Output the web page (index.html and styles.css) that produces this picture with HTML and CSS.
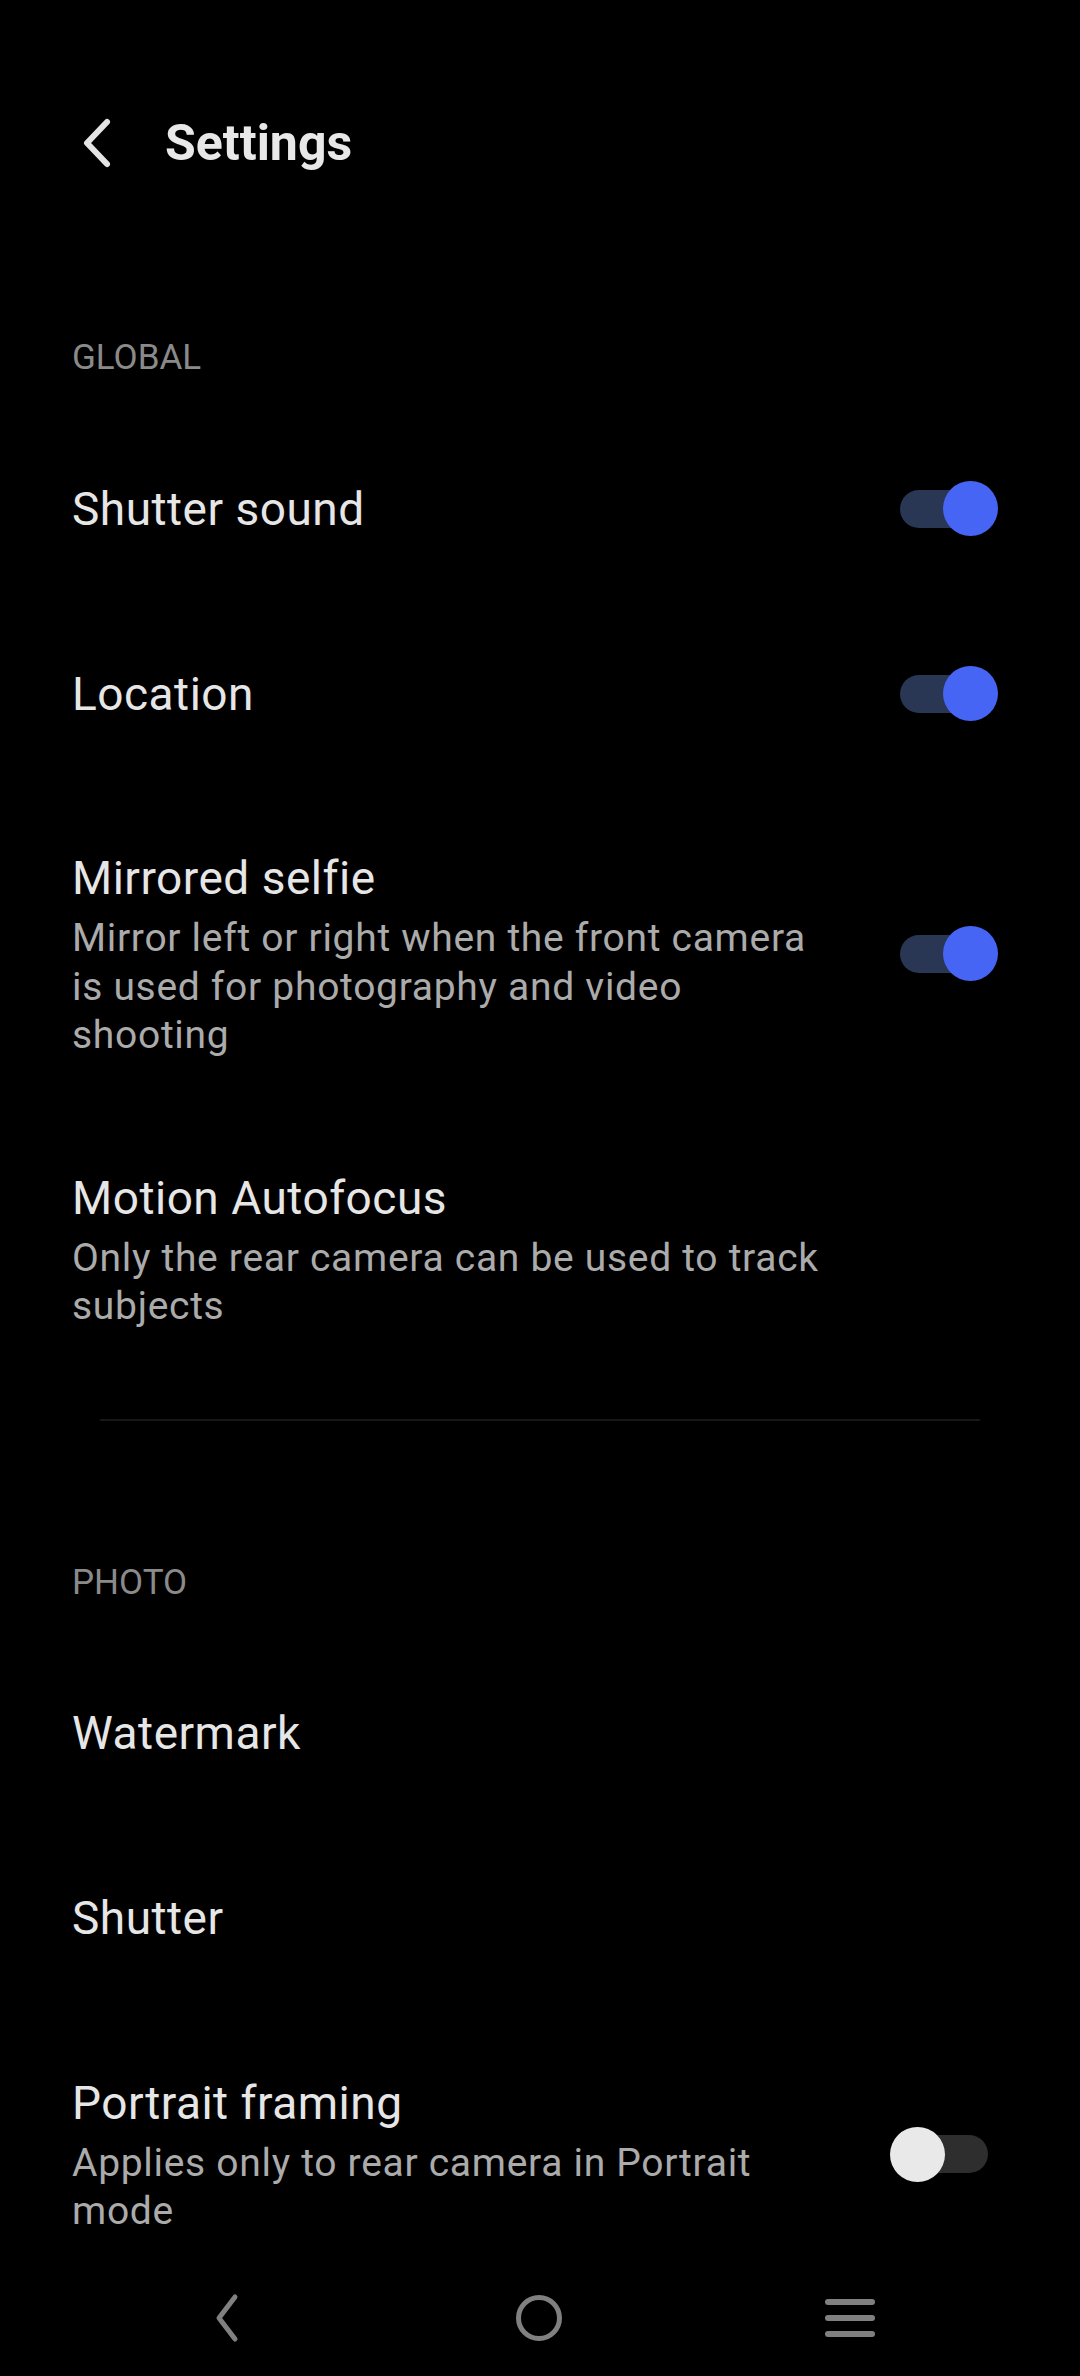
FILE: index.html
```html
<!DOCTYPE html>
<html lang="en">
<head>
<meta charset="utf-8">
<title>Settings</title>
<link rel="stylesheet" href="styles.css">
</head>
<body>
<div class="screen">
  <header class="appbar">
    <svg class="back" width="40" height="56" viewBox="0 0 40 56"><path d="M31 7 L11 28 L31 49" fill="none" stroke="#e4e4e4" stroke-width="6" stroke-linecap="round" stroke-linejoin="round"/></svg>
    <h1 class="appbar-title">Settings</h1>
  </header>

  <section class="group">
    <div class="group-label">GLOBAL</div>
    <div class="row single">
      <div class="text"><div class="title">Shutter sound</div></div>
      <div class="toggle on"><span class="track"></span><span class="thumb"></span></div>
    </div>
    <div class="row single">
      <div class="text"><div class="title">Location</div></div>
      <div class="toggle on"><span class="track"></span><span class="thumb"></span></div>
    </div>
    <div class="row multi after-single">
      <div class="text">
        <div class="title">Mirrored selfie</div>
        <div class="sub">Mirror left or right when the front camera is used for photography and video shooting</div>
      </div>
      <div class="toggle on"><span class="track"></span><span class="thumb"></span></div>
    </div>
    <div class="row multi">
      <div class="text">
        <div class="title">Motion Autofocus</div>
        <div class="sub">Only the rear camera can be used to track subjects</div>
      </div>
    </div>
  </section>

  <div class="divider"></div>

  <section class="group">
    <div class="group-label">PHOTO</div>
    <div class="row single">
      <div class="text"><div class="title">Watermark</div></div>
    </div>
    <div class="row single">
      <div class="text"><div class="title">Shutter</div></div>
    </div>
    <div class="row multi after-single">
      <div class="text">
        <div class="title">Portrait framing</div>
        <div class="sub">Applies only to rear camera in Portrait mode</div>
      </div>
      <div class="toggle off"><span class="track"></span><span class="thumb"></span></div>
    </div>
  </section>
</div>

<nav class="navbar">
  <svg class="nav-icon" width="60" height="60" viewBox="0 0 60 60"><path d="M38 9 L22 30 L38 51" fill="none" stroke="#808080" stroke-width="5" stroke-linecap="round" stroke-linejoin="round"/></svg>
  <svg class="nav-icon" width="60" height="60" viewBox="0 0 60 60"><circle cx="30" cy="30" r="20.5" fill="none" stroke="#808080" stroke-width="5"/></svg>
  <svg class="nav-icon" width="60" height="60" viewBox="0 0 60 60"><path d="M8 14 H52 M8 30 H52 M8 46 H52" fill="none" stroke="#808080" stroke-width="6" stroke-linecap="round"/></svg>
</nav>
</body>
</html>
```

FILE: styles.css
```css
* { box-sizing: border-box; }
html, body {
  margin: 0;
  padding: 0;
  background: #000;
}
body {
  width: 1080px;
  height: 2376px;
  overflow: hidden;
  font-family: Roboto, "Noto Sans", "Liberation Sans", sans-serif;
  color: #e6e6e6;
}
.screen {
  display: flex;
  flex-direction: column;
}
.appbar {
  display: flex;
  align-items: center;
  height: 60px;
  margin-top: 113px;
  padding-left: 76px;
}
.back { display: block; }
.appbar-title {
  margin: 0 0 0 49px;
  font-size: 50px;
  font-weight: 700;
  line-height: 60px;
  color: #e8e8e8;
}
.group {
  display: flex;
  flex-direction: column;
}
.group:first-of-type { margin-top: 161px; }
.group-label {
  padding-left: 72px;
  font-size: 35px;
  line-height: 48px;
  color: #8a8a8a;
  margin-bottom: 34px;
}
.row {
  display: flex;
  align-items: center;
  padding-left: 72px;
  padding-right: 82px;
}
.row.single { height: 185px; }
.row.multi { padding-top: 54px; padding-bottom: 54px; }
.row.multi.after-single { padding-top: 62px; }
.text {
  width: 763px;
  flex: none;
}
.title {
  font-size: 46px;
  line-height: 60px;
  letter-spacing: 0.5px;
  color: #e6e6e6;
}
.sub {
  margin-top: 6px;
  font-size: 39px;
  line-height: 48.5px;
  letter-spacing: 0.7px;
  color: #ababab;
}
.toggle {
  position: relative;
  width: 108px;
  height: 55px;
  flex: none;
  margin-left: auto;
}
.track {
  position: absolute;
  left: 10px;
  top: 8.5px;
  width: 88px;
  height: 38px;
  border-radius: 19px;
}
.thumb {
  position: absolute;
  top: 0;
  width: 55px;
  height: 55px;
  border-radius: 50%;
}
.toggle.on .track { background: #293654; }
.toggle.on .thumb { right: 0; background: #4765f4; }
.toggle.off .track { background: #2e2e2e; }
.toggle.off .thumb { left: 0; background: #e9e9e9; }
.divider {
  height: 2px;
  margin: 34px 100px 138px;
  background: #171717;
}
.navbar {
  position: fixed;
  left: 0;
  right: 0;
  bottom: 0;
  height: 116px;
  background: #000;
  display: flex;
  align-items: center;
  justify-content: space-between;
  padding: 0 200px 0 197px;
}
.nav-icon { display: block; }
```
